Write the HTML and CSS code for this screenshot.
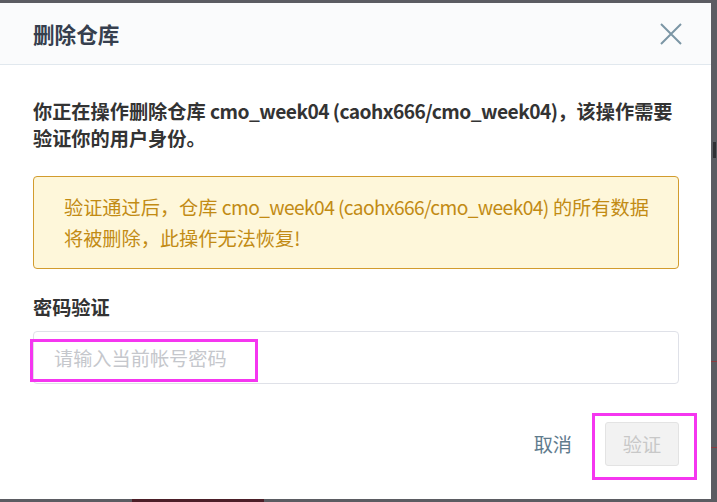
FILE: index.html
```html
<!DOCTYPE html>
<html lang="zh-CN">
<head>
<meta charset="utf-8">
<title>删除仓库</title>
<link rel="stylesheet" href="styles.css">
</head>
<body>
<div class="backdrop">
  <div class="under-btn"></div>
  <div class="under-line under-line-a"></div>
  <div class="under-line under-line-b"></div>
  <div class="under-glyph"></div>
  <div class="dialog">
    <div class="dlg-header">
      <h2 class="dlg-title">删除仓库</h2>
      <button class="dlg-close" aria-label="关闭">
        <svg width="22" height="22" viewBox="0 0 22 22"><path d="M1 1 L21 21 M21 1 L1 21" stroke="#7b96a5" stroke-width="2" fill="none"/></svg>
      </button>
    </div>
    <div class="dlg-body">
      <p class="intro">你正在操作删除仓库 <span class="latin">cmo_week04 (caohx666/cmo_week04)</span>，该操作需要<br>验证你的用户身份。</p>
      <div class="warn">验证通过后，仓库 <span class="latin">cmo_week04 (caohx666/cmo_week04)</span> 的所有数据<br>将被删除，此操作无法恢复!</div>
      <label class="field-label" for="pwd">密码验证</label>
      <input class="field-input" id="pwd" type="password" placeholder="请输入当前帐号密码">
    </div>
    <div class="dlg-footer">
      <button class="btn-text">取消</button>
      <button class="btn-primary" disabled>验证</button>
    </div>
    <span class="mark mark-input"></span>
    <span class="mark mark-btn"></span>
  </div>
</div>
</body>
</html>
```
FILE: styles.css
```css
html, body {
  margin: 0;
  padding: 0;
}
body {
  width: 717px;
  height: 502px;
  overflow: hidden;
  background: #5b5c62;
  font-family: "Noto Sans CJK SC", "Noto Sans", sans-serif;
}
.backdrop {
  position: relative;
  height: 502px;
  padding-top: 3px;
  box-sizing: border-box;
}
.under-btn {
  position: absolute;
  left: 132px;
  top: 499px;
  width: 132px;
  height: 10px;
  background: #4c1f28;
}
.under-line {
  position: absolute;
  left: 711px;
  width: 6px;
  height: 1px;
  background: #8c3b40;
}
.under-line-a { top: 361px; }
.under-line-b { top: 447px; }
.under-glyph {
  position: absolute;
  left: 713px;
  top: 142px;
  width: 3px;
  height: 16px;
  background: #2f3034;
}
.dialog {
  position: relative;
  width: 711px;
  height: 496px;
  background: #fff;
  display: flex;
  flex-direction: column;
}
.dlg-header {
  height: 61px;
  border-bottom: 1px solid #e1e8ee;
  background: #fafbfc;
  display: flex;
  align-items: center;
  justify-content: space-between;
  padding: 0 29px 0 33px;
}
.dlg-title {
  margin: 0;
  font-size: 21.6px;
  font-weight: 700;
  line-height: 1;
  color: #363f4e;
}
.dlg-close {
  border: 0;
  background: none;
  padding: 0;
  width: 22px;
  height: 22px;
  display: flex;
}
.dlg-body {
  padding: 33px 32px 0 33px;
}
.intro {
  margin: 0;
  font-size: 19.2px;
  font-weight: 700;
  line-height: 27px;
  color: #333;
  white-space: nowrap;
}
.intro .latin {
  letter-spacing: -0.55px;
}
.warn {
  margin-top: 24px;
  border: 1px solid #d29c2e;
  border-radius: 4px;
  background: #fef7da;
  color: #c28b14;
  padding: 15px 30px;
  font-size: 19.2px;
  line-height: 30.7px;
  white-space: nowrap;
}
.warn .latin {
  letter-spacing: -0.6px;
}
.field-label {
  display: block;
  margin-top: 25px;
  font-size: 19.2px;
  font-weight: 700;
  line-height: 27px;
  color: #333;
}
.field-input {
  display: block;
  margin-top: 10px;
  width: 100%;
  height: 53px;
  box-sizing: border-box;
  border: 1px solid #dfe1e8;
  border-radius: 4px;
  padding: 0 20px;
  font-size: 19.2px;
  font-family: inherit;
  outline: none;
  background: #fff;
}
.field-input::placeholder {
  color: #c5c7cc;
}
.dlg-footer {
  display: flex;
  justify-content: flex-end;
  align-items: center;
  margin-top: 38px;
  padding: 0 32px;
}
.btn-text {
  background: none;
  border: 0;
  color: #5f7b8d;
  font-size: 19.2px;
  font-family: inherit;
  padding: 0 16px;
  margin-right: 17px;
}
.btn-primary {
  width: 74px;
  height: 44px;
  background: #f2f2f2;
  border: 1px solid #e3e3e3;
  border-radius: 3px;
  color: #c8c8c8;
  font-size: 19.2px;
  font-family: inherit;
  padding: 0;
}
.mark {
  position: absolute;
  box-sizing: border-box;
  border: 3px solid #f536f0;
}
.mark-input {
  left: 30px;
  top: 336px;
  width: 228px;
  height: 43px;
}
.mark-btn {
  left: 592px;
  top: 410px;
  width: 105px;
  height: 67px;
}
```
